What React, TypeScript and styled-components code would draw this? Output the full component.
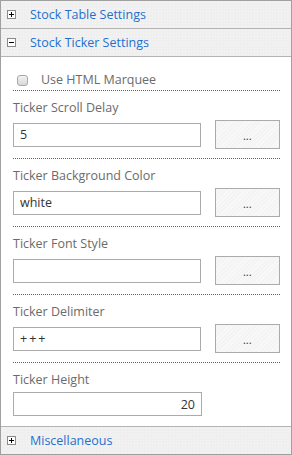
import styled, { createGlobalStyle } from "styled-components";

const GlobalStyle = createGlobalStyle`
  html, body {
    margin: 0;
    padding: 0;
    background: #ffffff;
  }
  body {
    font-family: "Open Sans", "Noto Sans", sans-serif;
    font-size: 12px;
  }
`;

const Panel = styled.div`
  width: 292px;
  height: 455px;
  box-sizing: border-box;
  border: 1px solid #a0a0a0;
  display: flex;
  flex-direction: column;
  background: #ffffff;
`;

const Header = styled.div<{ last?: boolean }>`
  height: 27px;
  flex-shrink: 0;
  display: flex;
  align-items: center;
  background-color: #efefef;
  background-image: radial-gradient(#f7f7f7 0.6px, transparent 0.8px);
  background-size: 3px 3px;
  border-top: ${(p) => (p.last ? "1px solid #b4b4b4" : "none")};
  border-bottom: ${(p) => (p.last ? "none" : "1px solid #b4b4b4")};
  cursor: pointer;
`;

const ToggleBox = styled.span`
  width: 9px;
  height: 9px;
  box-sizing: border-box;
  border: 1px solid #8a8a8a;
  background: #ffffff;
  margin-left: 6px;
  margin-right: 14px;
  display: flex;
  align-items: center;
  justify-content: center;
`;

const HeaderTitle = styled.span`
  color: #1f6fcf;
  font-size: 12.5px;
  line-height: 16px;
`;

const Body = styled.div`
  flex: 1;
  padding: 0 11px 0 12px;
  display: flex;
  flex-direction: column;
`;

const CheckRow = styled.label`
  display: flex;
  align-items: center;
  box-sizing: border-box;
  height: 34px;
  padding: 15px 0 2px 4px;
  line-height: 16px;
  border-bottom: 1px dotted #4060c0;
  color: #6b6b6b;
  font-size: 12.5px;
`;

const CheckBox = styled.span`
  width: 11px;
  height: 11px;
  box-sizing: border-box;
  border: 1px solid #a8a8a8;
  border-radius: 3px;
  background: linear-gradient(#f2f2f2, #d8d8d8);
  margin-right: 13px;
`;

const Field = styled.div<{ last?: boolean }>`
  display: flex;
  flex-direction: column;
  padding: 7px 0 ${(p) => (p.last ? "0" : "9px")};
  border-bottom: ${(p) => (p.last ? "none" : "1px dotted #4060c0")};
`;

const Label = styled.div`
  color: #6b6b6b;
  font-size: 12.5px;
  line-height: 20px;
  margin-bottom: 2px;
`;

const Row = styled.div`
  display: flex;
  align-items: center;
  gap: 14px;
`;

const Input = styled.div<{ align?: string }>`
  width: 189px;
  height: 24px;
  box-sizing: border-box;
  border: 1px solid #ababab;
  background: #ffffff;
  padding: 0 6px;
  display: flex;
  align-items: center;
  justify-content: ${(p) => (p.align === "right" ? "flex-end" : "flex-start")};
  color: #333333;
  font-size: 12.5px;
  letter-spacing: ${(p) => (p.align === "spaced" ? "2px" : "0")};
`;

const PickButton = styled.button`
  width: 66px;
  height: 29px;
  box-sizing: border-box;
  border: 1px solid #ababab;
  background-color: #f6f6f6;
  background-image: repeating-linear-gradient(
    135deg,
    #f9f9f9 0px,
    #f9f9f9 1px,
    #f4f4f4 1px,
    #f4f4f4 3px
  );
  color: #333333;
  font-family: "Open Sans", "Noto Sans", sans-serif;
  font-size: 11px;
  padding: 2px 0 0;
  cursor: pointer;
`;

const Plus = () => (
  <svg width="5" height="5" viewBox="0 0 5 5">
    <rect x="0" y="2" width="5" height="1" fill="#000" />
    <rect x="2" y="0" width="1" height="5" fill="#000" />
  </svg>
);

const Minus = () => (
  <svg width="5" height="5" viewBox="0 0 5 5">
    <rect x="0" y="2" width="5" height="1" fill="#000" />
  </svg>
);

const fields = [
  { label: "Ticker Scroll Delay", value: "5" },
  { label: "Ticker Background Color", value: "white" },
  { label: "Ticker Font Style", value: "" },
  { label: "Ticker Delimiter", value: "+++", spaced: true },
];

function App() {
  return (
    <>
      <GlobalStyle />
      <Panel>
        <Header>
          <ToggleBox>
            <Plus />
          </ToggleBox>
          <HeaderTitle>Stock Table Settings</HeaderTitle>
        </Header>
        <Header>
          <ToggleBox>
            <Minus />
          </ToggleBox>
          <HeaderTitle>Stock Ticker Settings</HeaderTitle>
        </Header>
        <Body>
          <CheckRow>
            <CheckBox />
            Use HTML Marquee
          </CheckRow>
          {fields.map((f) => (
            <Field key={f.label}>
              <Label>{f.label}</Label>
              <Row>
                <Input align={f.spaced ? "spaced" : undefined}>{f.value}</Input>
                <PickButton>...</PickButton>
              </Row>
            </Field>
          ))}
          <Field last>
            <Label>Ticker Height</Label>
            <Input align="right">20</Input>
          </Field>
        </Body>
        <Header last>
          <ToggleBox>
            <Plus />
          </ToggleBox>
          <HeaderTitle>Miscellaneous</HeaderTitle>
        </Header>
      </Panel>
    </>
  );
}

export default App;
